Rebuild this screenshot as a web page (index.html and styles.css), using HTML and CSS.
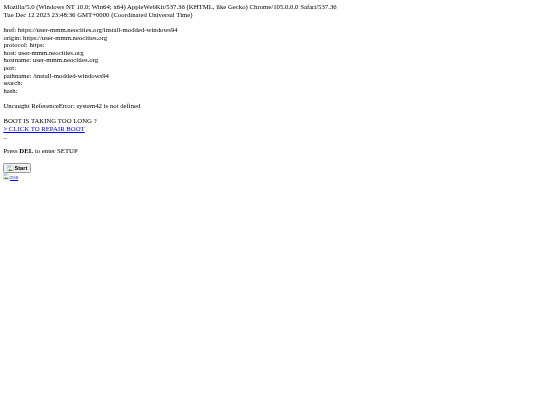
FILE: index.html
```html
<!DOCTYPE html>
<html>
<head>
<meta charset="utf-8">
<title>Boot</title>
<link rel="stylesheet" href="styles.css">
</head>
<body>
<main class="page">
<div>Mozilla/5.0 (Windows NT 10.0; Win64; x64) AppleWebKit/537.36 (KHTML, like Gecko) Chrome/105.0.0.0 Safari/537.36</div>
<div>Tue Dec 12 2023 23:48:36 GMT+0000 (Coordinated Universal Time)</div>
<br>
<div>href: https://user-mmm.neocities.org/install-modded-windows94</div>
<div>origin: https://user-mmm.neocities.org</div>
<div>protocol: https:</div>
<div>host: user-mmm.neocities.org</div>
<div>hostname: user-mmm.neocities.org</div>
<div>port:</div>
<div>pathname: /install-modded-windows94</div>
<div>search:</div>
<div>hash:</div>
<br>
<div>Uncaught ReferenceError: system42 is not defined</div>
<br>
<div>BOOT IS TAKING TOO LONG ?</div>
<div><a href="#">&gt; CLICK TO REPAIR BOOT</a></div>
<div>_</div>
<br>
<div>Press <b>DEL</b> to enter SETUP</div>
<br>
<button class="start" type="button"><svg class="broken" viewBox="0 0 16 16"><path d="M1 1h10l4 4v10H1z" fill="#fff" stroke="#a0a0a0"/><path d="M2 14l4-5 3 3 2-2 3 4z" fill="#5a9e4a"/><path d="M2 2h8v5H2z" fill="#b8cdf0"/></svg><span>Start</span></button>
<div class="alt-row"><a href="#"><svg class="broken" viewBox="0 0 16 16"><path d="M1 1h10l4 4v10H1z" fill="#fff" stroke="#a0a0a0"/><path d="M2 14l4-5 3 3 2-2 3 4z" fill="#5a9e4a"/><path d="M2 2h8v5H2z" fill="#b8cdf0"/></svg><span class="alt">D58</span></a></div>
</main>
</body>
</html>
```
FILE: styles.css
```css
html, body {
  margin: 0;
  background: #fff;
}
.page {
  padding: 8px;
  zoom: 0.421875;
  font-family: "Liberation Serif", "Times New Roman", serif;
  font-size: 16px;
  line-height: 17.95px;
  color: #000;
  filter: blur(0.25px);
}
a { color: #0000ee; }
.start {
  display: inline-flex;
  align-items: center;
  gap: 2px;
  height: 26px;
  padding: 0 6px;
  margin: 0;
  border: 2px solid #9a9a9a;
  border-radius: 3px;
  background: #efefef;
  font-family: "Liberation Sans", Arial, sans-serif;
  font-size: 13.33px;
  font-weight: bold;
  color: #000;
}
.broken {
  width: 16px;
  height: 16px;
  vertical-align: -2px;
}
.alt { font-size: 11px; }
.alt-row { line-height: 16px; }
```
